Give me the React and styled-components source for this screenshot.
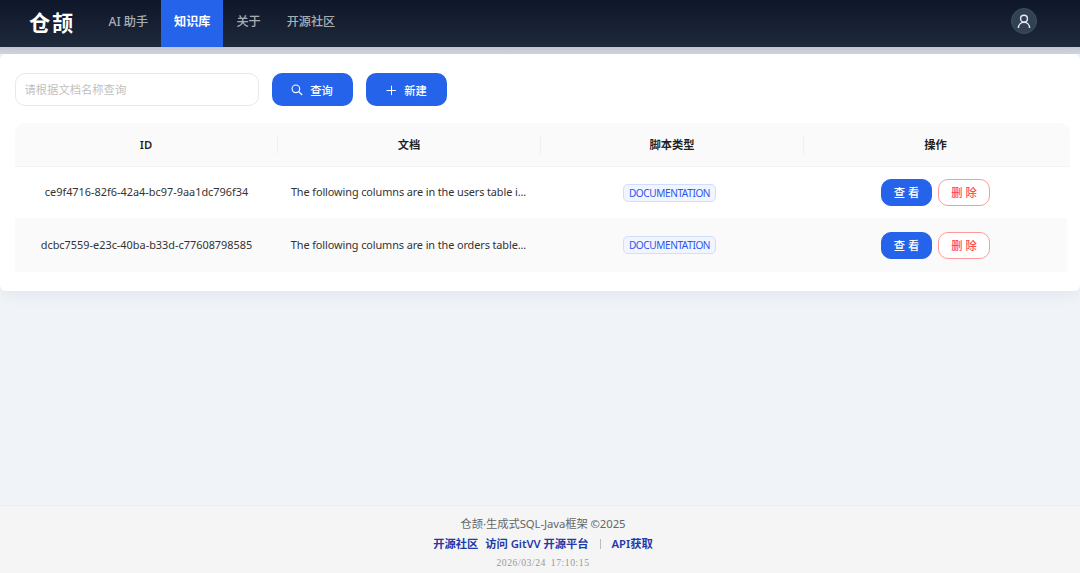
import React from "react"
import styled, { createGlobalStyle, css } from "styled-components"

const GlobalStyle = createGlobalStyle`
  * {
    box-sizing: border-box;
  }

  body {
    margin: 0;
    font-family: "Noto Sans", "Noto Sans CJK SC", sans-serif;
    font-size: 11.3px;
    color: rgba(0, 0, 0, 0.88);
    background: #f0f4f9;
  }
`

const Page = styled.div`
  display: flex;
  flex-direction: column;
  height: 573px;
  overflow: hidden;
`

const Header = styled.header`
  display: flex;
  flex: none;
  height: 47px;
  padding: 0 43px 0 29px;
  background: linear-gradient(180deg, #0f172a, #1e293b);
`

const Logo = styled.div`
  width: 66.5px;
  font-family: "Noto Sans CJK SC", sans-serif;
  font-size: 21.2px;
  font-weight: 700;
  line-height: 43px;
  letter-spacing: 1.8px;
  color: #fff;
`

const Menu = styled.nav`
  display: flex;
  flex: 1;
`

const MenuItem = styled.a`
  padding: 0 13px;
  font-size: 12.15px;
  font-weight: 500;
  line-height: 43px;
  letter-spacing: -0.02px;
  white-space: nowrap;
  color: rgba(255, 255, 255, 0.65);

  ${({ $active }) =>
    $active &&
    css`
      font-weight: 600;
      color: #fff;
      background: #2563eb;
    `}
`

const Avatar = styled.div`
  display: flex;
  align-items: center;
  justify-content: center;
  width: 26px;
  height: 26px;
  margin-top: 8px;
  border: 1px solid #40505f;
  border-radius: 50%;
  color: #e8ecf1;
  background: #334155;
`

const Main = styled.main`
  flex: 1;
  padding-top: 7px;
  background: linear-gradient(180deg, #c3c7d1, #d2d6df 7px, #f0f4f9 7px);
`

const Card = styled.section`
  height: 237px;
  padding: 19px 10px 0 15px;
  border-radius: 6px;
  background: #fff;
  box-shadow: 0 4px 16px rgba(15, 23, 42, 0.06);
`

const Toolbar = styled.div`
  display: flex;
  gap: 13px;
  margin-bottom: 17px;
`

const SearchInput = styled.input`
  width: 244px;
  height: 33px;
  padding: 0 9px 0 8.5px;
  border: 1px solid #e8e8e8;
  border-radius: 10px;
  outline: none;
  font-family: inherit;
  font-size: 11.3px;
  background: #fff;

  &::placeholder {
    color: #bfbfbf;
  }
`

const ToolButton = styled.button`
  display: flex;
  align-items: center;
  justify-content: center;
  gap: 7px;
  width: 81px;
  height: 33px;
  padding: 0 1px 0 0;
  border: 0;
  border-radius: 10px;
  font-family: inherit;
  font-size: 11.3px;
  font-weight: 500;
  color: #fff;
  background: #2563eb;
`

const Table = styled.div`
  display: flex;
  flex-direction: column;
`

const Row = styled.div`
  display: grid;
  grid-template-columns: repeat(4, 263px);
  align-items: center;
  width: 1052px;
  height: ${({ $striped }) => ($striped ? 54 : 51)}px;
  background: ${({ $striped }) => ($striped ? "#fafafa" : "#fff")};
`

const HeadRow = styled(Row)`
  width: 1055px;
  height: 44px;
  border-bottom: 1px solid #f3f3f3;
  border-radius: 10px 10px 0 0;
  background: #fafafa;
`

const HeadCell = styled.div`
  height: 18px;
  border-right: 1px solid #f0f0f0;
  font-weight: 600;
  line-height: 18px;
  text-align: center;

  &:last-child {
    border-right: 0;
  }
`

const Cell = styled.div`
  display: flex;
  align-items: center;
  justify-content: center;
  gap: 6px;
  padding: 0 13px;
  line-height: 16px;
  white-space: nowrap;
  color: #333;
`

const IdText = styled.span`
  margin-bottom: 1px;
  font-size: 10.9px;
`

const ContentText = styled.span`
  margin: 0 2px 1px 0;
  font-size: 10.9px;
  letter-spacing: -0.1px;
`

const Tag = styled.span`
  height: 18px;
  margin-right: 6px;
  padding: 0 5px;
  border: 1px solid #d0deff;
  border-radius: 5px;
  font-size: 10.1px;
  line-height: 16px;
  letter-spacing: -0.42px;
  color: #2f54eb;
  background: #f0f5ff;
`

const ActionButton = styled.button`
  width: ${({ $danger }) => ($danger ? 52 : 51)}px;
  height: 27px;
  padding: 0 0 1px;
  border: 1px solid ${({ $danger }) => ($danger ? "#ff9a9c" : "#2563eb")};
  border-radius: 10px;
  font-family: inherit;
  font-size: 11.3px;
  font-weight: 500;
  color: ${({ $danger }) => ($danger ? "#ff4d4f" : "#fff")};
  background: ${({ $danger }) => ($danger ? "#fff" : "#2563eb")};
`

const Footer = styled.footer`
  display: flex;
  flex: none;
  flex-direction: column;
  align-items: center;
  height: 68px;
  padding: 8px 0 0 6px;
  border-top: 1px solid #ececec;
  background: #f5f5f5;
`

const Copyright = styled.div`
  line-height: 20px;
  letter-spacing: -0.07px;
  color: #666;
`

const FooterLinks = styled.div`
  display: flex;
  align-items: center;
  font-weight: 600;
  line-height: 20px;
  letter-spacing: -0.05px;
  color: #1e3aaa;
`

const FooterLink = styled.a`
  margin-right: ${({ $gap }) => $gap || 0}px;
`

const Divider = styled.span`
  width: 1px;
  height: 10px;
  margin-right: 11px;
  background: #bbb;
`

const Timestamp = styled.div`
  font-family: "Liberation Serif", serif;
  font-size: 9.75px;
  line-height: 18px;
  letter-spacing: 0.5px;
  word-spacing: 2px;
  color: #999;
`

const menu = ["AI 助手", "知识库", "关于", "开源社区"]

const rows = [
  {
    id: "ce9f4716-82f6-42a4-bc97-9aa1dc796f34",
    content: "The following columns are in the users table i...",
  },
  {
    id: "dcbc7559-e23c-40ba-b33d-c77608798585",
    content: "The following columns are in the orders table...",
  },
]

function UserIcon() {
  return (
    <svg width="14" height="15" viewBox="0 0 14 15" fill="none" stroke="currentColor" strokeWidth="1.4">
      <circle cx="7" cy="4.7" r="3.4" />
      <path d="M1.4 14C1.5 10.8 3.8 8.3 7 8.3s5.5 2.5 5.6 5.7" />
    </svg>
  )
}

function SearchIcon() {
  return (
    <svg width="12" height="12" viewBox="0 0 12 12" fill="none" stroke="currentColor" strokeWidth="1.1">
      <circle cx="4.9" cy="4.8" r="3.8" />
      <path d="M7.6 7.5L11.2 11" />
    </svg>
  )
}

function PlusIcon() {
  return (
    <svg width="12" height="12" viewBox="0 0 12 12" stroke="currentColor" strokeWidth="1">
      <path d="M1.5 6.5h9.4M6.5 1.7v9.4" />
    </svg>
  )
}

export default function App() {
  return (
    <Page>
      <GlobalStyle />
      <Header>
        <Logo>仓颉</Logo>
        <Menu>
          {menu.map(item => (
            <MenuItem key={item} $active={item === "知识库"}>
              {item}
            </MenuItem>
          ))}
        </Menu>
        <Avatar>
          <UserIcon />
        </Avatar>
      </Header>

      <Main>
        <Card>
          <Toolbar>
            <SearchInput placeholder="请根据文档名称查询" />
            <ToolButton>
              <SearchIcon />
              查询
            </ToolButton>
            <ToolButton>
              <PlusIcon />
              新建
            </ToolButton>
          </Toolbar>

          <Table>
            <HeadRow>
              <HeadCell>ID</HeadCell>
              <HeadCell>文档</HeadCell>
              <HeadCell>脚本类型</HeadCell>
              <HeadCell>操作</HeadCell>
            </HeadRow>
            {rows.map((row, index) => (
              <Row key={row.id} $striped={index % 2 === 1}>
                <Cell>
                  <IdText>{row.id}</IdText>
                </Cell>
                <Cell>
                  <ContentText>{row.content}</ContentText>
                </Cell>
                <Cell>
                  <Tag>DOCUMENTATION</Tag>
                </Cell>
                <Cell>
                  <ActionButton>查 看</ActionButton>
                  <ActionButton $danger>删 除</ActionButton>
                </Cell>
              </Row>
            ))}
          </Table>
        </Card>
      </Main>

      <Footer>
        <Copyright>仓颉·生成式SQL-Java框架 ©2025</Copyright>
        <FooterLinks>
          <FooterLink $gap={7}>开源社区</FooterLink>
          <FooterLink $gap={11}>访问 GitVV 开源平台</FooterLink>
          <Divider />
          <FooterLink>API获取</FooterLink>
        </FooterLinks>
        <Timestamp>2026/03/24 17:10:15</Timestamp>
      </Footer>
    </Page>
  )
}
